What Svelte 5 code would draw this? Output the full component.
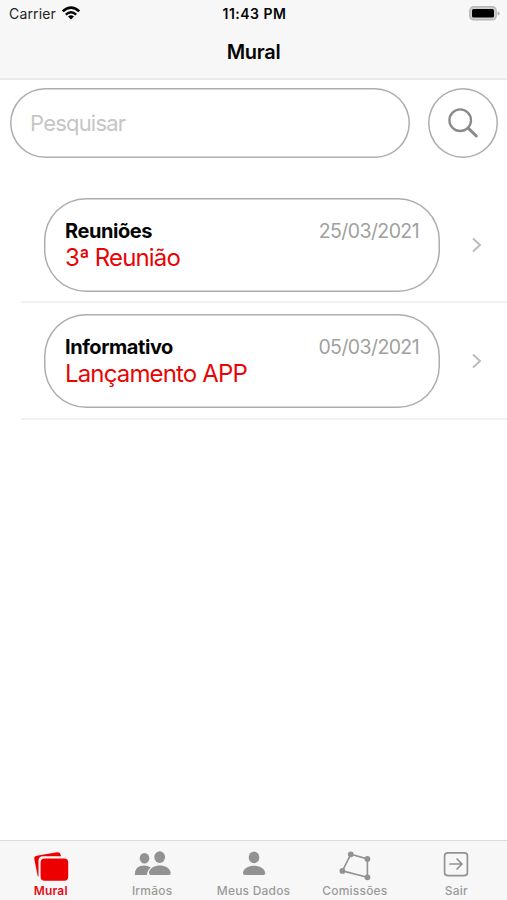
<script>
  const notices = [
    { kind: 'Reuniões', title: '3ª Reunião', date: '25/03/2021' },
    { kind: 'Informativo', title: 'Lançamento APP', date: '05/03/2021' }
  ];
  const tabs = ['Mural', 'Irmãos', 'Meus Dados', 'Comissões', 'Sair'];
</script>

<div class="screen">
  <header>
    <div class="status">
      <div class="carrier">
        <span>Carrier</span>
        <svg width="18" height="14" viewBox="0 0 18 14" fill="none" stroke="#050505" stroke-width="2.5">
          <path d="M.8 5.3Q9-2 17.2 5.3" />
          <path d="M3.8 8.6Q9 4 14.2 8.6" stroke-width="2.4" />
          <path d="M9 13.5L6 10.5Q9 8 12 10.5Z" fill="#050505" stroke="none" />
        </svg>
      </div>
      <span class="time">11:43 PM</span>
      <svg class="battery" width="31" height="15" viewBox="0 0 31 15">
        <rect x=".8" y=".8" width="26.4" height="13" rx="3.8" fill="#cfcfcf" stroke="#b8b8b8" stroke-width="1.4" />
        <rect x="3" y="3" width="22" height="8.6" rx="1.5" fill="#000" />
        <path d="M28.6 5.2Q30.7 6 30.7 7.4Q30.7 8.7 28.6 9.5Z" fill="#aaa" />
      </svg>
    </div>
    <h1>Mural</h1>
  </header>

  <main>
    <div class="search">
      <input type="text" placeholder="Pesquisar" />
      <button aria-label="Pesquisar">
        <svg width="32" height="32" viewBox="0 0 32 32" fill="none" stroke="#8b8b8b" stroke-linecap="round">
          <circle cx="13.2" cy="13.2" r="10.8" stroke-width="2.3" />
          <path d="M21.2 21.2L29.3 29" stroke-width="3" />
        </svg>
      </button>
    </div>
    <ul>
      {#each notices as n}
        <li>
          <article>
            <div class="row"><strong>{n.kind}</strong><time>{n.date}</time></div>
            <p>{n.title}</p>
          </article>
          <svg width="12" height="16" viewBox="0 0 12 16" fill="none" stroke="#bcbcbc" stroke-width="2">
            <path d="M2 1.5L9 8L2 14.5" />
          </svg>
        </li>
      {/each}
    </ul>
  </main>

  <nav>
    {#each tabs as tab, i}
      <div class="tab" class:active={i === 0}>
        <svg width="38" height="32" viewBox="0 0 38 32" fill="currentColor">
          {#if i === 0}
            <path d="M5.8 26.5L2.3 9.2Q1.8 6.4 4.6 5.8L25 2.2Q27.8 1.8 28.6 4.4L29 6.3H11Q6.5 6.3 6.5 10.8V26.5Z" />
            <rect x="8.6" y="8.4" width="27.6" height="22.4" rx="4" />
          {:else if i === 1}
            <ellipse cx="11.5" cy="8.3" rx="4.8" ry="5.2" />
            <ellipse cx="26.7" cy="7.1" rx="5.4" ry="5.9" />
            <path d="M1.8 25Q1.7 15.6 11.3 15.6Q15 15.6 17.7 17.6Q14.2 20.3 14 25Z" />
            <path d="M16 22.5C17.5 13.2 36 13.2 37.6 22.5Q38 25 36 25H17.8Q15.8 25 16 22.5Z" />
          {:else if i === 2}
            <ellipse cx="19" cy="7.4" rx="5.3" ry="5.8" />
            <path d="M8 22.5C9.5 13.4 28.6 13.4 30.1 22.5Q30.5 25 28.5 25H9.8Q7.8 25 8 22.5Z" />
          {:else if i === 3}
            <path d="M14.8 4.3L31.4 8.9V27.3L6.4 20.9Z" fill="none" stroke="currentColor" stroke-width="1.6" />
            <circle cx="14.8" cy="4.3" r="2.9" /><circle cx="31.4" cy="8.9" r="2.9" />
            <circle cx="31.4" cy="27.3" r="2.9" /><circle cx="6.4" cy="20.9" r="2.9" />
          {:else}
            <g fill="none" stroke="currentColor" stroke-width="1.7" stroke-linecap="round" stroke-linejoin="round">
              <rect x="7.6" y="2.8" width="22.8" height="22.8" rx="3" />
              <path d="M13 14H25M20 9L25 14L20 19" />
            </g>
          {/if}
        </svg>
        <span>{tab}</span>
      </div>
    {/each}
  </nav>
</div>

<style>
  :global(body) { margin: 0; background: #fff; }
  .screen {
    width: 507px; height: 900px; overflow: hidden;
    display: flex; flex-direction: column;
    font-family: Inter, "Liberation Sans", sans-serif; color: #050505;
  }
  svg { display: block; flex: none; }
  header { height: 78px; flex: none; background: #f7f7f7; border-bottom: 2px solid #ebebeb; }
  .status {
    height: 27px; display: grid; grid-template-columns: 1fr auto 1fr; align-items: center;
    padding: 0 7px 0 9px; font-size: 14px;
  }
  .carrier { display: flex; align-items: center; gap: 6px; color: #222; }
  .carrier span { letter-spacing: .15px; }
  .carrier svg { margin-top: -2px; }
  .time { font-weight: 600; letter-spacing: .5px; }
  .battery { justify-self: end; }
  h1 { margin: 13px 0 0; font-size: 20px; line-height: 24px; font-weight: 600; text-align: center; letter-spacing: -.3px; }
  main { flex: 1; }
  .search { display: flex; justify-content: space-between; padding: 8px 9px 0 10px; }
  input, button, article { box-sizing: border-box; border: 0; box-shadow: inset 0 0 0 1.5px #adadad; }
  input {
    width: 400px; height: 70px; border-radius: 35px;
    padding: 0 20px; font: 22px Inter, sans-serif; letter-spacing: -.8px; background: #fff; outline: none;
  }
  input::placeholder { color: #c6c6c6; opacity: 1; }
  button {
    width: 70px; height: 70px; padding: 0;
    border-radius: 50%; background: #fff; display: flex; align-items: center; justify-content: center;
  }
  ul { list-style: none; margin: 28px 0 0 21px; padding: 0; }
  li {
    box-sizing: border-box; height: 117px; border-bottom: 2px solid #f1f1f1;
    display: flex; align-items: flex-start; justify-content: space-between; padding: 12px 24px 0 23px;
  }
  li + li { padding-top: 11px; }
  article { width: 396px; height: 94px; border-radius: 42px; padding: 21px 21px 0 21px; }
  li > svg { margin-top: 39px; }
  .row { display: flex; justify-content: space-between; font-size: 20px; line-height: 25px; }
  strong { font-weight: 700; letter-spacing: -.43px; }
  time { color: #a0a0a0; font-size: 19.5px; letter-spacing: -.6px; }
  p { margin: 0; font-size: 24px; line-height: 28px; letter-spacing: -.85px; color: #e80505; }
  nav {
    box-sizing: border-box; height: 60px; flex: none; display: flex; background: #f7f7f7;
    border-top: 1px solid #dcdcdc; color: #929292;
  }
  .tab { flex: 1; display: flex; flex-direction: column; align-items: center; padding-top: 9px; }
  .tab span { font-size: 12px; line-height: 15px; margin-top: 1px; font-weight: 500; letter-spacing: .2px; white-space: nowrap; color: #9b9b9b; }
  .active { color: #ec0000; }
  .active span { color: #e30c16; font-weight: 600; }
</style>
